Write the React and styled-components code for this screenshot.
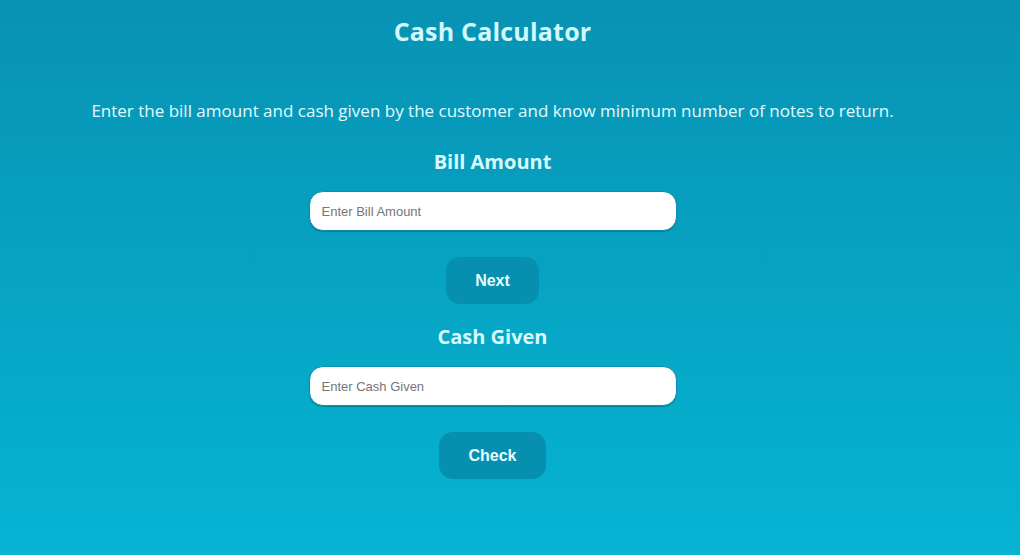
import React, { useState } from "react";
import styled, { createGlobalStyle } from "styled-components";

const GlobalStyle = createGlobalStyle`
  html, body {
    margin: 0;
    padding: 0;
    height: 100%;
  }
  body {
    font-family: "Open Sans", "Liberation Sans", sans-serif;
    background: linear-gradient(to bottom, #0892b3, #06b4d3);
    min-height: 555px;
  }
`;

const Page = styled.main`
  display: flex;
  flex-direction: column;
  align-items: center;
  padding: 0 35px 0 0;
  min-height: 555px;
  color: #d6fbff;
`;

const Title = styled.h1`
  margin: 14px 0 0;
  font-size: 25px;
  font-weight: 700;
  line-height: 34px;
  letter-spacing: 0.2px;
  color: #cff9fd;
`;

const Intro = styled.p`
  margin: 51px 0 0;
  font-size: 17px;
  line-height: 24px;
  color: #e0fcff;
`;

const Label = styled.h2`
  margin: ${(p) => (p.first ? "25px" : "19px")} 0 0;
  font-size: 20px;
  font-weight: 700;
  line-height: 28px;
  color: #d9fbff;
`;

const Input = styled.input`
  box-sizing: border-box;
  margin-top: 15px;
  width: 368px;
  height: 40px;
  padding: 0 12px;
  border: 1px solid #0a8fae;
  border-radius: 14px;
  background: #fff;
  box-shadow: 0 1px 1px rgba(0, 60, 80, 0.35);
  font-family: "Liberation Sans", Arial, sans-serif;
  font-size: 13px;
  color: #333;
  outline: none;

  &::placeholder {
    color: #767676;
  }
`;

const Button = styled.button`
  margin-top: 26px;
  height: 47px;
  padding: 0 ${(p) => p.pad}px;
  border: none;
  border-radius: 14px;
  background: #078faf;
  color: #e6fdff;
  font-family: "Liberation Sans", Arial, sans-serif;
  font-size: 16px;
  font-weight: 700;
  cursor: pointer;
`;

export default function App() {
  const [bill, setBill] = useState("");
  const [cash, setCash] = useState("");

  return (
    <>
      <GlobalStyle />
      <Page>
        <Title>Cash Calculator</Title>
        <Intro>
          Enter the bill amount and cash given by the customer and know minimum
          number of notes to return.
        </Intro>
        <Label first>Bill Amount</Label>
        <Input
          type="number"
          placeholder="Enter Bill Amount"
          value={bill}
          onChange={(e) => setBill(e.target.value)}
        />
        <Button pad={29}>Next</Button>
        <Label>Cash Given</Label>
        <Input
          type="number"
          placeholder="Enter Cash Given"
          value={cash}
          onChange={(e) => setCash(e.target.value)}
        />
        <Button pad={29}>Check</Button>
      </Page>
    </>
  );
}
